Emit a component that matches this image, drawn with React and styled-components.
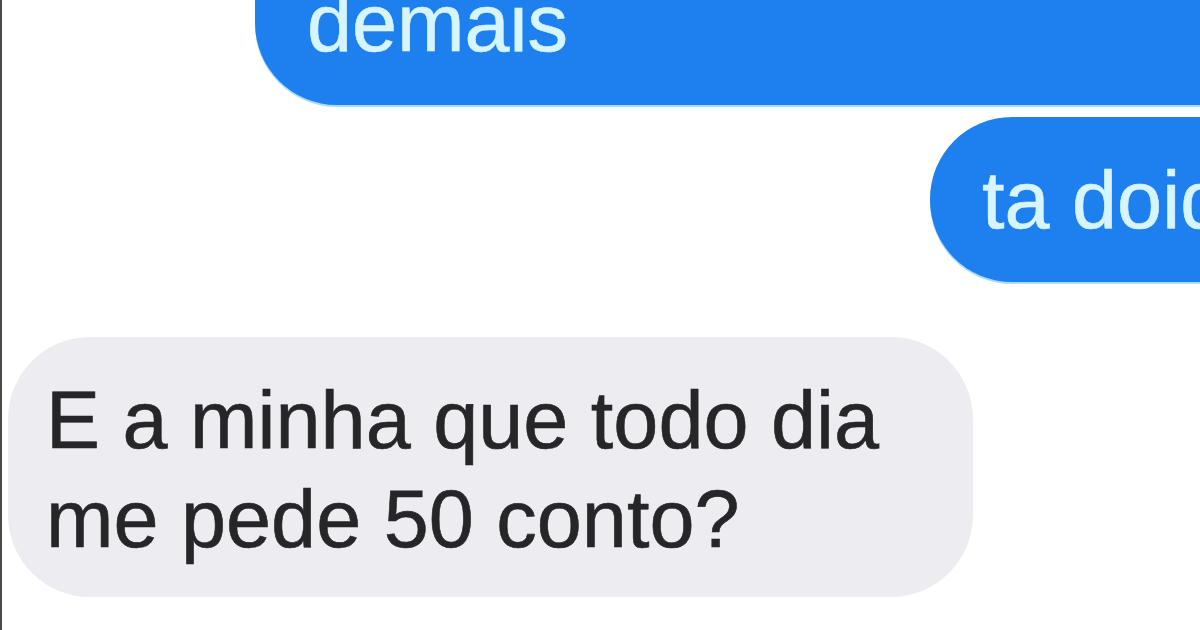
import React from "react";
import styled, { createGlobalStyle } from "styled-components";

const Global = createGlobalStyle`
  html, body {
    margin: 0;
    padding: 0;
    background: #ffffff;
    overflow: hidden;
  }
`;

const Screen = styled.div`
  width: 1200px;
  height: 630px;
  box-sizing: border-box;
  border-left: 2px solid #4a4a4a;
  background: #ffffff;
  overflow: hidden;
  display: flex;
  flex-direction: column;
  font-family: "Liberation Sans", Arial, Helvetica, sans-serif;
  font-size: 81px;
  line-height: 99px;
`;

const Row = styled.div`
  display: flex;
  margin-top: ${(p) => p.$gap || 0}px;
`;

const Sent = styled.div`
  box-sizing: border-box;
  flex: 1;
  display: flex;
  align-items: flex-end;
  height: ${(p) => p.$height}px;
  margin-left: ${(p) => p.$left}px;
  margin-right: -140px;
  padding: 0 0 ${(p) => p.$bottom}px 52px;
  background: #1e80ef;
  color: #d6f5ff;
  -webkit-text-stroke: 0.6px #d6f5ff;
  border-radius: ${(p) => (p.$cut ? "0 0 0 82px" : "82px")};
  white-space: nowrap;
  overflow: hidden;
  box-shadow: 0 2px 0 #a9dcf6;
`;

const Received = styled.div`
  box-sizing: border-box;
  width: 965px;
  margin-left: 6px;
  padding: 34px 0 28px 38px;
  background: #ededf1;
  color: #262628;
  -webkit-text-stroke: 0.6px #262628;
  border-radius: 82px;
`;

export default function App() {
  return (
    <>
      <Global />
      <Screen>
        <Row>
          <Sent $cut $height={105} $left={253} $bottom={32}>
            demais
          </Sent>
        </Row>
        <Row $gap={12}>
          <Sent $height={165} $left={928} $bottom={32}>
            ta doido
          </Sent>
        </Row>
        <Row $gap={55}>
          <Received>
            E a minha que todo dia
            <br />
            me pede 50 conto?
          </Received>
        </Row>
      </Screen>
    </>
  );
}
